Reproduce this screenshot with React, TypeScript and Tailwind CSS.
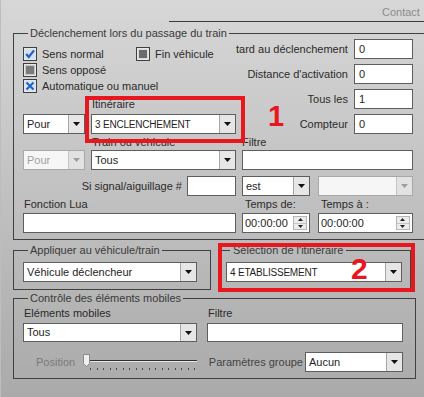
import React from "react";

function Arrow({ disabled = false }: { disabled?: boolean }) {
  return (
    <svg width="7" height="4" viewBox="0 0 7 4">
      <path d="M0 0h7L3.5 4z" fill={disabled ? "#9c9c9c" : "#111"} />
    </svg>
  );
}

function Select({
  value,
  className = "",
  disabled = false,
  caps = false,
  h = "h-[20px]",
}: {
  value: string;
  className?: string;
  disabled?: boolean;
  caps?: boolean;
  h?: string;
}) {
  return (
    <div
      className={`flex ${h} border ${
        disabled ? "border-[#a8a8a8] bg-[#f6f6f6] text-[#a0a0a0]" : "border-[#5e5e5e] bg-white text-[#1e1e1e]"
      } ${className}`}
    >
      <span
        className={`flex-1 flex items-center px-[3px] whitespace-nowrap overflow-hidden ${
          caps ? "text-[10px] tracking-[-0.2px]" : ""
        }`}
      >
        {value}
      </span>
      <span
        className={`w-[16px] flex items-center justify-center border-l ${
          disabled ? "border-[#c4c4c4] bg-[#e2e2e2]" : "border-[#a6a6a6] bg-[#e6e6e6]"
        }`}
      >
        <Arrow disabled={disabled} />
      </span>
    </div>
  );
}

function Input({ value = "", className = "", h = "h-[20px]" }: { value?: string; className?: string; h?: string }) {
  return (
    <div className={`flex items-center ${h} border border-[#5e5e5e] bg-white px-[4px] text-[#1e1e1e] ${className}`}>
      {value}
    </div>
  );
}

function TimeInput({ className = "" }: { className?: string }) {
  return (
    <div className={`flex h-[20px] border border-[#5e5e5e] bg-white text-[#1e1e1e] ${className}`}>
      <span className="flex-1 flex items-center pl-[2px]">00:00:00</span>
      <span className="w-[14px] my-[2px] mr-[2px] flex flex-col border border-[#b5b5b5] bg-[#ececec]">
        <span className="flex-1 flex items-center justify-center border-b border-[#c4c4c4]">
          <svg width="5" height="3" viewBox="0 0 5 3">
            <path d="M0 3h5L2.5 0z" fill="#222" />
          </svg>
        </span>
        <span className="flex-1 flex items-center justify-center">
          <svg width="5" height="3" viewBox="0 0 5 3">
            <path d="M0 0h5L2.5 3z" fill="#222" />
          </svg>
        </span>
      </span>
    </div>
  );
}

function Check({ kind }: { kind: "check" | "gray" | "dark" | "x" }) {
  return (
    <svg width="14" height="14" viewBox="0 0 14 14" className="shrink-0">
      <rect x="0.5" y="0.5" width="13" height="13" fill="#e6e6e6" stroke="#3f3f3f" />
      {kind === "check" && (
        <>
          <rect x="2" y="2" width="10" height="10" fill="#d3e2f3" />
          <path d="M3.2 7 L5.8 10 L11 3.4" stroke="#2260c4" strokeWidth="2.2" fill="none" />
        </>
      )}
      {kind === "x" && (
        <>
          <rect x="2" y="2" width="10" height="10" fill="#d3e2f3" />
          <path d="M3.5 3.5 L10.5 10.5 M10.5 3.5 L3.5 10.5" stroke="#2260c4" strokeWidth="2" fill="none" />
        </>
      )}
      {kind === "gray" && <rect x="2.5" y="2.5" width="9" height="9" fill="#7a7a7a" stroke="#c8c8c8" />}
      {kind === "dark" && <rect x="2.5" y="2.5" width="9" height="9" fill="#6a6a6a" stroke="#dadada" />}
    </svg>
  );
}

function CheckRow({ kind, label, className = "" }: { kind: "check" | "gray" | "dark" | "x"; label: string; className?: string }) {
  return (
    <div className={`flex items-center gap-[5px] ${className}`}>
      <Check kind={kind} />
      <span className="whitespace-nowrap">{label}</span>
    </div>
  );
}

function FieldRow({ label, value }: { label: string; value: string }) {
  return (
    <div className="flex h-[20px] items-center justify-end gap-[6px]">
      <span className="whitespace-nowrap">{label}</span>
      <Input value={value} className="w-[59px]" />
    </div>
  );
}

export default function App() {
  return (
    <div className="flex w-[424px] h-[397px] overflow-hidden bg-linear-to-b from-[#d7d7d7] to-[#aaaaaa] font-['Liberation_Sans',Arial,sans-serif] text-[11px] text-[#2b2b2b]">
      <div className="w-[5px] bg-[#e2e2e2] border-r border-[#bdbdbd]" />
      <div className="flex-1 flex flex-col">
        {/* onglets */}
        <div className="flex h-[22px]">
          <div className="w-[168px]" />
          <div className="flex-1 border-b border-[#3a3a3a] pl-[213px] pt-[4px] text-[#8c8c8c] whitespace-nowrap overflow-hidden">
            Contact
          </div>
        </div>

        {/* Déclenchement */}
        <fieldset className="ml-[12px] mt-[5px] w-[403px] border border-[#404040] pl-[9px] pr-[12px] pb-[6px]">
          <legend className="ml-[5px] px-[2px] leading-[12px] text-[#3a3a3a]">Déclenchement lors du passage du train</legend>

          <div className="flex">
            <div className="w-[213px] flex flex-col">
              <div className="pt-[7px]">
                <div className="flex h-[16px] items-center">
                  <CheckRow kind="check" label="Sens normal" className="w-[113px]" />
                  <CheckRow kind="dark" label="Fin véhicule" />
                </div>
                <div className="flex h-[16px] items-center">
                  <CheckRow kind="gray" label="Sens opposé" />
                </div>
                <div className="flex h-[16px] items-center">
                  <CheckRow kind="x" label="Automatique ou manuel" />
                </div>
              </div>
              <div className="flex gap-[6px]">
                <div className="w-[62px] flex flex-col">
                  <div className="h-[20px]" />
                  <Select value="Pour" />
                </div>
                <div className="w-[145px] flex flex-col relative">
                  <div className="h-[20px] flex items-end pb-[2px] pl-[1px]">Itinéraire</div>
                  <Select value="3 ENCLENCHEMENT" caps />
                  <div className="absolute top-[2px] -left-[6px] -right-[9px] -bottom-[9px] border-4 border-[#e8161e]" />
                </div>
              </div>
            </div>
            <div className="flex-1 flex flex-col gap-[5px] relative">
              <FieldRow label="tard au déclenchement" value="0" />
              <FieldRow label="Distance d'activation" value="0" />
              <FieldRow label="Tous les" value="1" />
              <FieldRow label="Compteur" value="0" />
              <span className="absolute left-[32px] top-[63px] text-[29px] leading-none font-bold text-[#e8161e]">1</span>
            </div>
          </div>

          <div className="flex gap-[6px]">
            <div className="w-[62px] flex flex-col">
              <div className="h-[16px]" />
              <Select value="Pour" disabled />
            </div>
            <div className="w-[145px] flex flex-col">
              <div className="h-[16px] leading-[16px] pl-[1px] whitespace-nowrap">Train ou véhicule</div>
              <Select value="Tous" />
            </div>
            <div className="flex-1 flex flex-col">
              <div className="h-[16px] leading-[16px]">Filtre</div>
              <Input />
            </div>
          </div>

          <div className="flex mt-[6px] h-[20px]">
            <div className="w-[213px] flex items-center justify-end gap-[5px]">
              <span className="whitespace-nowrap">Si signal/aiguillage #</span>
              <Input className="w-[49px]" />
            </div>
            <Select value="est" className="ml-[6px] w-[68px]" />
            <Select value="" disabled className="ml-[8px] flex-1" />
          </div>

          <div className="flex">
            <div className="w-[213px] flex flex-col">
              <div className="h-[17px] flex items-center pl-[1px]">Fonction Lua</div>
              <Input />
            </div>
            <div className="ml-[6px] w-[68px] flex flex-col">
              <div className="h-[17px] flex items-center pl-[3px]">Temps de:</div>
              <TimeInput />
            </div>
            <div className="ml-[8px] flex-1 flex flex-col">
              <div className="h-[17px] flex items-center pl-[3px]">Temps à :</div>
              <TimeInput />
            </div>
          </div>
        </fieldset>

        {/* Appliquer / Sélection */}
        <div className="flex ml-[12px] mt-[4px]">
          <fieldset className="w-[198px] border border-[#404040] pl-[9px] pr-[13px] pb-[7px]">
            <legend className="ml-[5px] px-[2px] leading-[12px] text-[#3a3a3a]">Appliquer au véhicule/train</legend>
            <Select value="Véhicule déclencheur" className="mt-[6px]" />
          </fieldset>
          <div className="relative ml-[10px]">
            <fieldset className="w-[190px] border border-[#404040] pl-[4px] pr-[8px] pb-[7px]">
              <legend className="ml-[4px] px-[3px] leading-[12px] text-[#3a3a3a]">Sélection de l'itinéraire</legend>
              <Select value="4 ETABLISSEMENT" caps className="mt-[6px]" />
            </fieldset>
            <div className="absolute -top-[1px] -left-[3px] -right-[4px] -bottom-[2px] border-4 border-[#e8161e]" />
            <span className="absolute left-[130px] top-[10px] text-[30px] leading-none font-bold text-[#e8161e]">2</span>
          </div>
        </div>

        {/* Contrôle des éléments mobiles */}
        <fieldset className="ml-[12px] mt-[2px] w-[403px] border border-[#404040] pl-[9px] pr-[12px] pb-[6px]">
          <legend className="ml-[5px] px-[2px] leading-[12px] text-[#3a3a3a]">Contrôle des éléments mobiles</legend>
          <div className="flex gap-[10px]">
            <div className="w-[174px] flex flex-col">
              <div className="h-[19px] flex items-end pb-[2px] pl-[1px]">Eléments mobiles</div>
              <Select value="Tous" h="h-[19px]" />
            </div>
            <div className="flex-1 flex flex-col">
              <div className="h-[19px] flex items-end pb-[2px] pl-[1px]">Filtre</div>
              <Input h="h-[19px]" />
            </div>
          </div>
          <div className="flex items-center h-[20px] mt-[10px]">
            <span className="pl-[13px] text-[#7a7a7a]">Position</span>
            <div className="relative ml-[10px] w-[114px] h-[20px]">
              <div className="ml-[3px] mr-[2px] mt-[8px] h-[2px] border-t border-[#2f2f2f] border-b border-b-[#e6e6e6]" />
              <div className="ml-[5px] mr-[4px] mt-[6px] flex justify-between">
                {Array.from({ length: 17 }).map((_, i) => (
                  <span key={i} className="w-[1px] h-[2px] bg-[#4a4a4a]" />
                ))}
              </div>
              <svg width="7" height="13" viewBox="0 0 7 13" className="absolute left-[-2px] top-[2px]">
                <path d="M0.5 0.5h6v9L3.5 12.5L0.5 9.5z" fill="#efefef" stroke="#8a8a8a" />
              </svg>
            </div>
            <div className="flex-1 flex items-center justify-end gap-[2px]">
              <span className="whitespace-nowrap text-[#444]">Paramètres groupe</span>
              <Select value="Aucun" className="w-[98px]" />
            </div>
          </div>
        </fieldset>
      </div>
    </div>
  );
}
